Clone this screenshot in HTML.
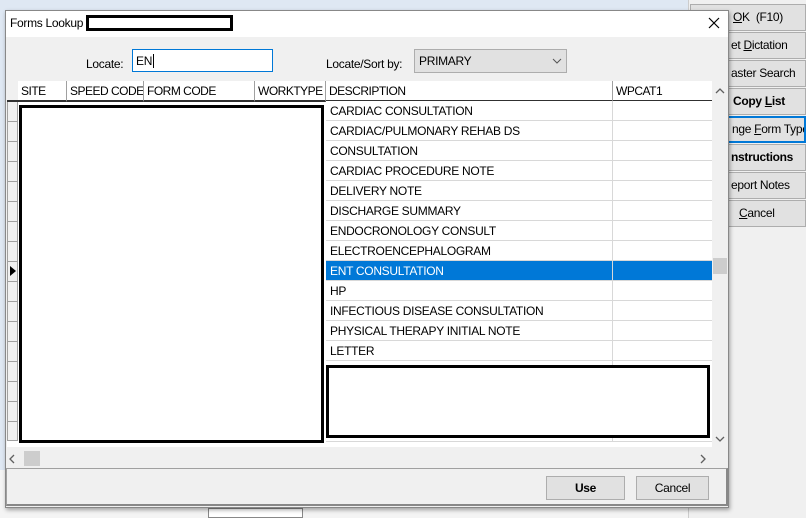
<!DOCTYPE html>
<html><head><meta charset="utf-8"><style>
*{box-sizing:border-box;margin:0;padding:0}
body{width:806px;height:518px;overflow:hidden;background:#f0f0f0;font-family:"Liberation Sans",sans-serif;font-size:12px;color:#000;position:relative;letter-spacing:-0.3px}
.a{position:absolute}
.bg-btn{position:absolute;left:690px;width:116px;height:27px;background:#e1e1e1;border:1px solid #adadad;font-size:12px;line-height:25px;padding-left:6px;white-space:nowrap;overflow:hidden}
.hd{position:absolute;top:81px;height:21px;background:#fff;border-right:1px solid #a0a0a0;border-bottom:2px solid #303030;line-height:21px;padding-left:3px;white-space:nowrap;overflow:hidden;letter-spacing:-0.5px}
.row{position:absolute;left:326px;width:386px;height:20px;border-bottom:1px solid #d8d8d8;line-height:21px;background:#fff}
.row span{padding-left:4px}
.row i{position:absolute;left:286px;top:0;height:20px;border-left:1px solid #d8d8d8}
.rh{position:absolute;left:7px;width:11px;height:20px;background:#f0f0f0;border:1px solid #a0a0a0;border-top:none}
.btn{position:absolute;top:476px;height:24px;background:#e1e1e1;border:1px solid #adadad;text-align:center;line-height:22px;font-size:12px}
</style></head><body>
<div class="a" style="left:0;top:0;width:690px;height:518px;background:#dfe8f3"></div>
<div class="a" style="left:0;top:470px;width:690px;height:48px;background:#f4f4f4"></div>
<div class="a" style="left:208px;top:508px;width:95px;height:10px;border:1px solid #888;background:#fff"></div>
<div class="a" style="left:688px;top:0;width:118px;height:518px;background:#f0f0f0;border-left:1px solid #ccc"></div>
<div class="bg-btn" style="top:4px;padding-left:42px"><u>O</u>K&nbsp; (F10)</div>
<div class="bg-btn" style="top:32px;padding-left:40px">et <u>D</u>ictation</div>
<div class="bg-btn" style="top:60px;padding-left:40px">aster Search</div>
<div class="bg-btn" style="top:88px;padding-left:42px;font-weight:bold">Copy <u>L</u>ist</div>
<div class="bg-btn" style="top:116px;padding-left:40px;border:2px solid #0078d7;line-height:23px">nge <u>F</u>orm Type</div>
<div class="bg-btn" style="top:144px;padding-left:40px;font-weight:bold">nstructions</div>
<div class="bg-btn" style="top:172px;padding-left:40px">eport Notes</div>
<div class="bg-btn" style="top:200px;padding-left:48px"><u>C</u>ancel</div>

<div class="a" style="left:5px;top:10px;width:724px;height:498px;background:#f0f0f0;border:1px solid #888;box-shadow:1px 2px 4px rgba(0,0,0,.35)"></div>
<div class="a" style="left:6px;top:11px;width:722px;height:26px;background:#fff"></div>
<div class="a" style="left:10px;top:16px;font-size:12px">Forms Lookup</div>
<div class="a" style="left:86px;top:15px;width:147px;height:16px;border:3px solid #000;background:#fff"></div>
<svg class="a" style="left:707px;top:16px" width="14" height="14"><path d="M2 2L12 12M12 2L2 12" stroke="#000" stroke-width="1.2"/></svg>

<div class="a" style="left:86px;top:57px;font-size:12px">Locate:</div>
<div class="a" style="left:132px;top:49px;width:141px;height:23px;border:1px solid #0078d7;background:#fff;padding:4px 3px;font-size:12px">EN<span style="border-left:1px solid #000;margin-left:1px"></span></div>
<div class="a" style="left:326px;top:57px;font-size:12px">Locate/Sort by:</div>
<div class="a" style="left:414px;top:49px;width:153px;height:24px;border:1px solid #adadad;background:#e1e1e1;padding:4px 4px;font-size:12px">PRIMARY</div>
<svg class="a" style="left:552px;top:57px" width="10" height="8"><path d="M1 2L5 6L9 2" stroke="#555" fill="none"/></svg>

<div class="a" style="left:7px;top:81px;width:705px;height:366px;background:#fff"></div>
<div class="a" style="left:7px;top:81px;width:12px;height:21px;background:#f0f0f0;border-right:1px solid #a0a0a0;border-bottom:2px solid #303030"></div>
<div class="hd" style="left:18px;width:49px">SITE</div>
<div class="hd" style="left:67px;width:77px">SPEED CODE</div>
<div class="hd" style="left:144px;width:111px">FORM CODE</div>
<div class="hd" style="left:255px;width:71px">WORKTYPE</div>
<div class="hd" style="left:326px;width:287px">DESCRIPTION</div>
<div class="hd" style="left:613px;width:99px;border-right:none">WPCAT1</div>

<div class="rh" style="top:102px"></div><div class="rh" style="top:122px"></div><div class="rh" style="top:142px"></div><div class="rh" style="top:162px"></div><div class="rh" style="top:182px"></div><div class="rh" style="top:202px"></div><div class="rh" style="top:222px"></div><div class="rh" style="top:242px"></div><div class="rh" style="top:262px"></div><div class="rh" style="top:282px"></div><div class="rh" style="top:302px"></div><div class="rh" style="top:322px"></div><div class="rh" style="top:342px"></div><div class="rh" style="top:362px"></div><div class="rh" style="top:382px"></div><div class="rh" style="top:402px"></div><div class="rh" style="top:422px;height:19px"></div>
<svg class="a" style="left:9px;top:265px" width="8" height="12"><path d="M1 1L7 6L1 11Z" fill="#000"/></svg>

<div class="row" style="top:101px"><span>CARDIAC CONSULTATION</span><i></i></div>
<div class="row" style="top:121px"><span>CARDIAC/PULMONARY REHAB DS</span><i></i></div>
<div class="row" style="top:141px"><span>CONSULTATION</span><i></i></div>
<div class="row" style="top:161px"><span>CARDIAC PROCEDURE NOTE</span><i></i></div>
<div class="row" style="top:181px"><span>DELIVERY NOTE</span><i></i></div>
<div class="row" style="top:201px"><span>DISCHARGE SUMMARY</span><i></i></div>
<div class="row" style="top:221px"><span>ENDOCRONOLOGY CONSULT</span><i></i></div>
<div class="row" style="top:241px"><span>ELECTROENCEPHALOGRAM</span><i></i></div>
<div class="row" style="top:261px;background:#0078d7;color:#fff"><span>ENT CONSULTATION</span><i></i></div>
<div class="row" style="top:281px"><span>HP</span><i></i></div>
<div class="row" style="top:301px"><span>INFECTIOUS DISEASE CONSULTATION</span><i></i></div>
<div class="row" style="top:321px"><span>PHYSICAL THERAPY INITIAL NOTE</span><i></i></div>
<div class="row" style="top:341px"><span>LETTER</span><i></i></div>
<div class="row" style="top:361px;height:81px;border-bottom:1px solid #d8d8d8"><i style="height:81px"></i></div>

<div class="a" style="left:19px;top:105px;width:305px;height:338px;border:3px solid #000;background:#fff"></div>
<div class="a" style="left:326px;top:365px;width:384px;height:73px;border:3px solid #000;background:#fff"></div>

<div class="a" style="left:712px;top:81px;width:16px;height:366px;background:#f0f0f0"></div>
<svg class="a" style="left:715px;top:87px" width="10" height="8"><path d="M1 6L5 2L9 6" stroke="#606060" fill="none" stroke-width="1.3"/></svg>
<div class="a" style="left:713px;top:258px;width:14px;height:16px;background:#cdcdcd"></div>
<svg class="a" style="left:715px;top:435px" width="10" height="8"><path d="M1 2L5 6L9 2" stroke="#606060" fill="none" stroke-width="1.3"/></svg>
<div class="a" style="left:6px;top:450px;width:706px;height:17px;background:#f0f0f0"></div>
<svg class="a" style="left:8px;top:454px" width="8" height="10"><path d="M6 1L2 5L6 9" stroke="#606060" fill="none" stroke-width="1.3"/></svg>
<div class="a" style="left:24px;top:451px;width:16px;height:15px;background:#cdcdcd"></div>
<svg class="a" style="left:699px;top:454px" width="8" height="10"><path d="M2 1L6 5L2 9" stroke="#606060" fill="none" stroke-width="1.3"/></svg>

<div class="a" style="left:6px;top:468px;width:722px;height:38px;border:1px solid #a0a0a0;border-right:2px solid #888;border-bottom:2px solid #888;background:#f0f0f0"></div>
<div class="btn" style="left:546px;width:79px;font-weight:bold">Use</div>
<div class="btn" style="left:636px;width:73px">Cancel</div>
</body></html>
